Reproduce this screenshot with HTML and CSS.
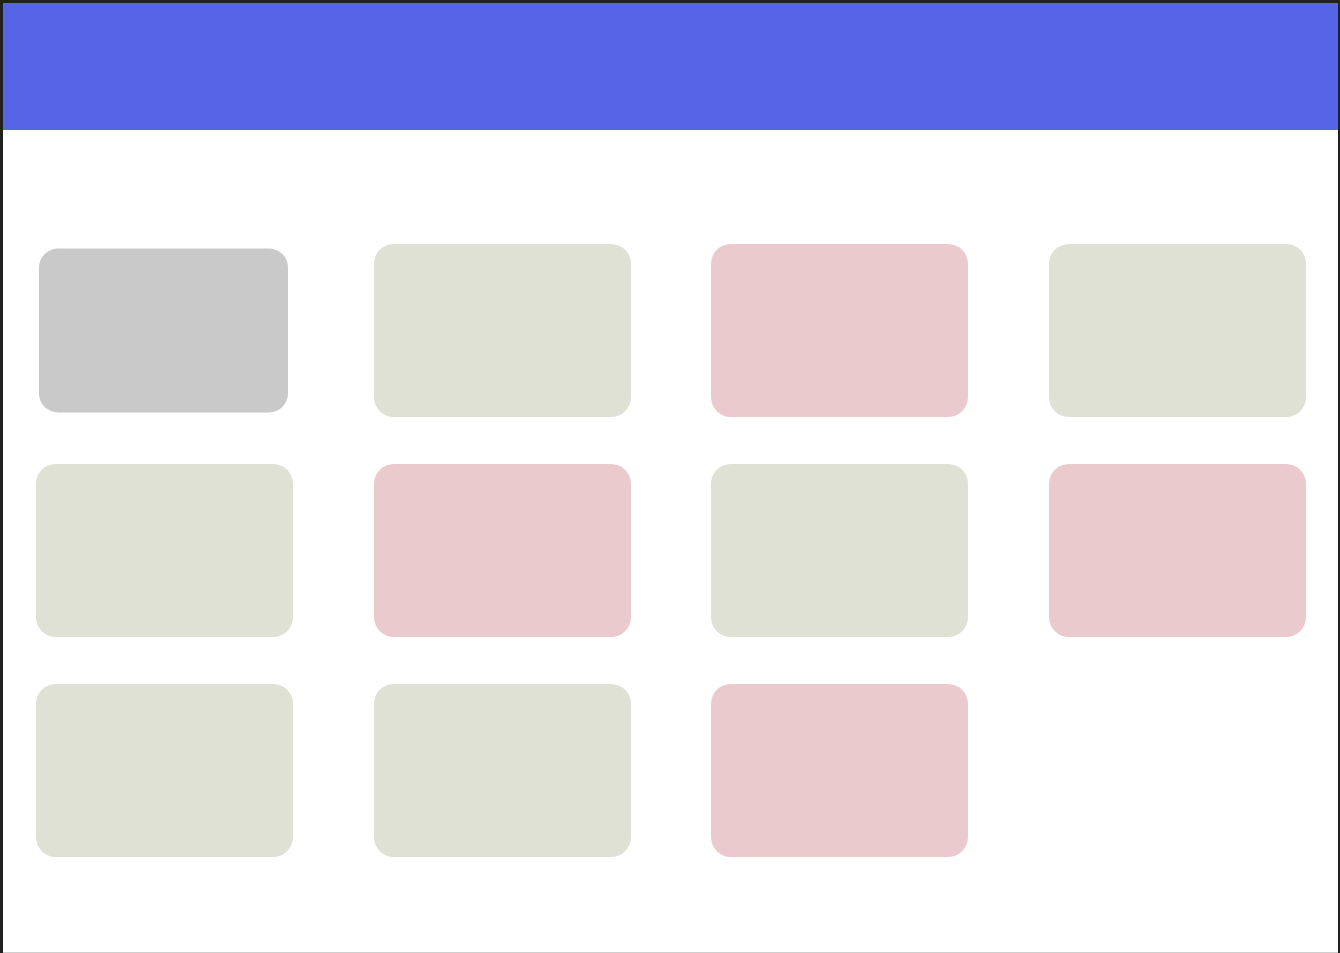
FILE: index.html
```html
<!DOCTYPE html>
<html lang="en">
<head>
<meta charset="utf-8">
<title>Cards</title>
<link rel="stylesheet" href="styles.css">
</head>
<body>
<div class="frame">
  <header class="topbar"></header>
  <main class="board">
    <div class="grid">
      <div class="card card-grey card-active"></div>
      <div class="card card-green"></div>
      <div class="card card-pink"></div>
      <div class="card card-green"></div>
      <div class="card card-green"></div>
      <div class="card card-pink"></div>
      <div class="card card-green"></div>
      <div class="card card-pink"></div>
      <div class="card card-green"></div>
      <div class="card card-green"></div>
      <div class="card card-pink"></div>
    </div>
  </main>
</div>
</body>
</html>
```

FILE: styles.css
```css
html, body {
  margin: 0;
  padding: 0;
}
body {
  background: #212121;
  width: 1340px;
  height: 953px;
  overflow: hidden;
  font-family: "Liberation Sans", Arial, sans-serif;
}
.frame {
  margin: 3px 0 0 3px;
  width: 1335px;
  height: 949px;
  background: #ffffff;
  border-bottom: 1px solid #cfcfcf;
  display: flex;
  flex-direction: column;
}
.topbar {
  height: 127px;
  background: #5565e5;
  flex: none;
}
.board {
  padding: 114px 32px 0 33px;
}
.grid {
  display: grid;
  grid-template-columns: repeat(4, 257px);
  grid-auto-rows: 173px;
  justify-content: space-between;
  row-gap: 47px;
}
.card {
  border-radius: 20px;
}
.card-green {
  background: #dee1d3;
}
.card-pink {
  background: #ebcace;
}
.card-grey {
  background: #c9c9c9;
}
.card-active {
  transform: translateX(-1px) scale(0.969, 0.948);
}
```
